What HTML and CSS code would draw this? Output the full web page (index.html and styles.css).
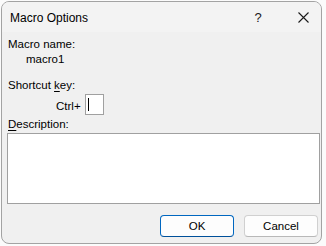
FILE: index.html
```html
<!DOCTYPE html>
<html>
<head>
<meta name="viewport" content="width=device-width, initial-scale=1.0">
<link rel="stylesheet" href="styles.css">
</head>
<body>

<div class="window">
  <div class="titlebar">
    <span class="title">Macro Options</span>
    <span class="help">?</span>
    <span class="close">
      <svg width="11" height="11" viewBox="0 0 11 11"><path d="M0.5 0.5L10.5 10.5M10.5 0.5L0.5 10.5" stroke="#1a1a1a" stroke-width="1.1" fill="none"/></svg>
    </span>
  </div>

  <div class="content">
    <div class="label first">Macro name:</div>
    <div class="value">macro1</div>

    <div class="label gap">Shortcut <u>k</u>ey:</div>
    <div class="shortcut">
      <span class="ctrl">Ctrl+</span>
      <span class="keybox"><span class="caret"></span></span>
    </div>

    <div class="label desc-label"><u>D</u>escription:</div>
    <div class="desc"></div>

    <div class="buttons">
      <button class="btn ok">OK</button>
      <button class="btn">Cancel</button>
    </div>
  </div>
</div>

</body>
</html>
```

FILE: styles.css
```css
* {box-sizing: border-box;}
body {margin: 0; background: #fbfbfb; font-family: "Liberation Sans", Arial, sans-serif; color: #000;}

.window {margin: 1px 0 0 1px; width: 321px; height: 243px; border: 1px solid #a3a3a3; border-radius: 8px; overflow: hidden; background: #f0f0f0;}

.titlebar {height: 30px; background: #f3f3f3; display: flex; align-items: center;}
.title {flex: 1; padding-left: 8px; font-size: 12px; padding-top: 1px;}
.help {width: 20px; text-align: center; font-size: 13px; margin-right: 17px; color: #1a1a1a;}
.close {width: 36px; height: 30px; display: flex; align-items: center; justify-content: center;}

.content {padding: 0 3px 0 5px; font-size: 11.5px;}
.label, .value {line-height: 15px; height: 15px;}
.label {padding-left: 1px;}
.first {margin-top: 5px;}
.value {padding-left: 19px;}
.gap {margin-top: 11px;}
u {text-decoration-thickness: 1px; text-underline-offset: 2px;}

.shortcut {display: flex; align-items: center; margin-top: 1px; padding-left: 49px; height: 21px;}
.ctrl {margin-right: 4px; margin-top: 3px;}
.keybox {width: 19px; height: 21px; background: #fff; border: 1px solid #a0a0a0; padding: 3px 0 0 2px;}
.caret {display: block; width: 1px; height: 13px; background: #000;}

.desc-label {margin-top: 2px;}
.desc {margin-top: 1px; width: 313px; height: 71px; background: #fff; border: 1px solid #a0a0a0;}

.buttons {display: flex; justify-content: flex-end; gap: 10px; margin-top: 11px;}
.btn {width: 74px; height: 22px; font-family: "Liberation Sans", Arial, sans-serif; font-size: 11.5px; color: #000; background: #fdfdfd; border: 1px solid #d0d0d0; border-bottom-color: #b8b8b8; border-radius: 4px; padding: 0;}
.ok {border: 1px solid #0067c0; border-bottom-color: #00509a;}
```
